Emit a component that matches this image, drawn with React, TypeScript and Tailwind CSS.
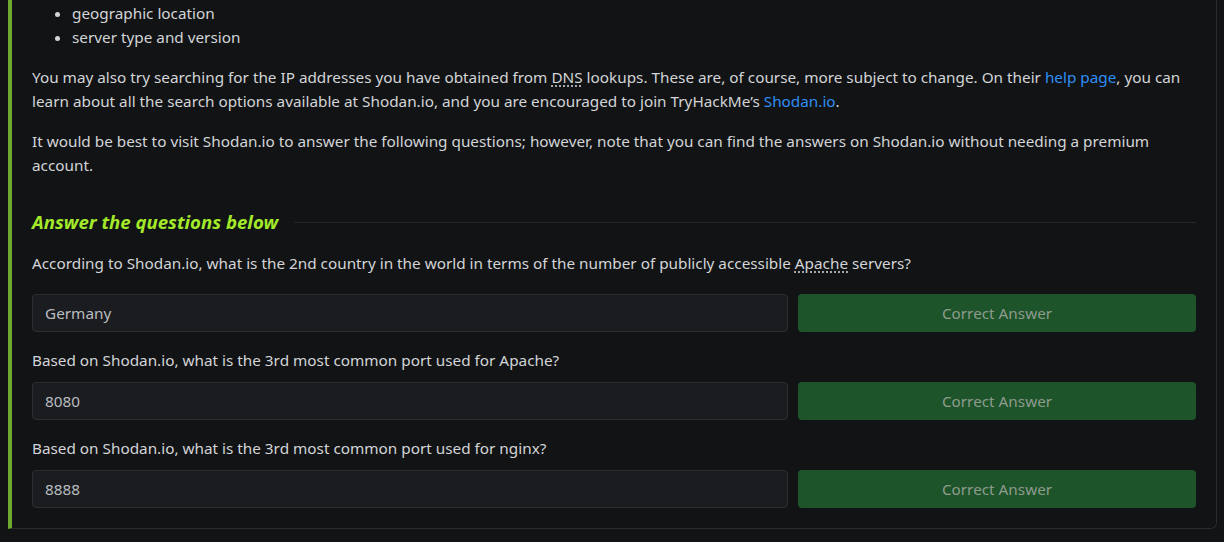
import React from 'react'

const font = { fontFamily: "'Noto Sans', 'Open Sans', sans-serif" }

const questions = [
  {
    text: (
      <>
        According to Shodan.io, what is the 2nd country in the world in terms of the number of publicly accessible{' '}
        <abbr className="underline decoration-dotted underline-offset-[3px]" title="Apache HTTP Server">
          Apache
        </abbr>{' '}
        servers?
      </>
    ),
    answer: 'Germany',
    gap: 'mb-[19px]',
  },
  { text: 'Based on Shodan.io, what is the 3rd most common port used for Apache?', answer: '8080', gap: 'mb-[10px]' },
  { text: 'Based on Shodan.io, what is the 3rd most common port used for nginx?', answer: '8888', gap: 'mb-[10px]' },
]

export default function App() {
  return (
    <div className="min-h-[542px] bg-[#121314] pl-2 pr-[7px] pb-[14px] text-[15.3px] leading-6 text-[#d3d5d8]" style={font}>
      <div className="rounded-br-md border-b border-r border-l-4 border-[#2a2b2d] border-l-[#6ea92d] pl-5 pr-5 pb-5 pt-px">
        <ul className="list-disc pl-10 marker:text-[#d3d5d8]">
          <li>geographic location</li>
          <li>server type and version</li>
        </ul>

        <p className="mt-4">
          You may also try searching for the IP addresses you have obtained from{' '}
          <abbr className="underline decoration-dotted underline-offset-[3px]" title="Domain Name System">
            DNS
          </abbr>{' '}
          lookups. These are, of course, more subject to change. On their{' '}
          <a className="text-[#2f8ef5]" href="#">
            help page
          </a>
          , you can learn about all the search options available at Shodan.io, and you are encouraged to join TryHackMe’s{' '}
          <a className="text-[#2f8ef5]" href="#">
            Shodan.io
          </a>
          .
        </p>

        <p className="mt-4">
          It would be best to visit Shodan.io to answer the following questions; however, note that you can find the answers
          on Shodan.io without needing a premium account.
        </p>

        <div className="mt-8 mb-4 flex items-center gap-4">
          <h3 className="text-[18.6px] font-bold italic leading-[26px] text-[#a3ea2a]">Answer the questions below</h3>
          <div className="h-px flex-1 bg-[#262729]" />
        </div>

        {questions.map((q, i) => (
          <div key={i} className={i > 0 ? 'mt-4' : ''}>
            <p className={q.gap}>{q.text}</p>
            <div className="flex gap-[10px]">
              <div className="flex h-[38px] flex-1 items-center rounded border border-[#2e2f32] bg-[#1b1c1f] px-3 text-[#b9bcc0]">
                {q.answer}
              </div>
              <button className="h-[38px] w-[398px] rounded bg-[#1e5429] text-[#8d9b8e]">Correct Answer</button>
            </div>
          </div>
        ))}
      </div>
    </div>
  )
}
